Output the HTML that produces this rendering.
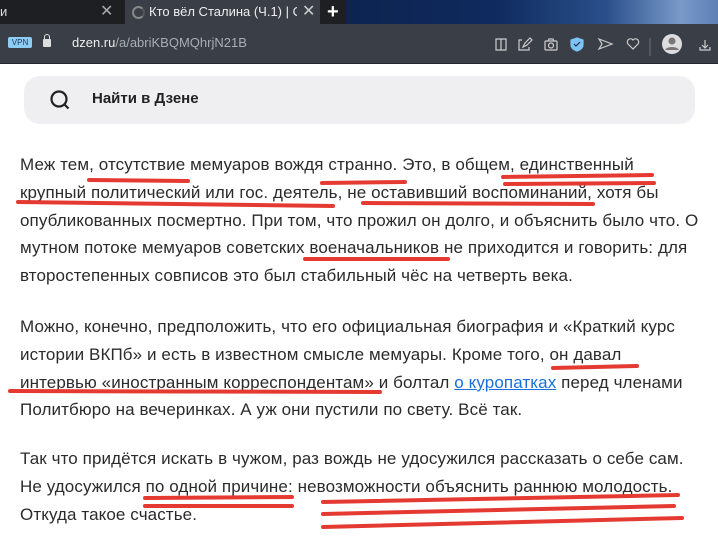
<!DOCTYPE html>
<html><head><meta charset="utf-8"><style>
body{margin:0;width:718px;height:542px;overflow:hidden;background:#fff;font-family:"Liberation Sans","DejaVu Sans",sans-serif;position:relative}
.tabs{position:absolute;left:0;top:0;width:718px;height:24px;background:#1e1f22}
.desk{position:absolute;left:346px;top:0;width:372px;height:24px;background:linear-gradient(90deg,#0d2450 0%,#0f2a5e 40%,#2a4f8a 70%,#7a9ac8 90%,#5d7fb5 100%)}
.tab1{position:absolute;left:0;top:0;width:124px;height:24px;color:#ddd;font-size:13px;line-height:24px}
.tab2{position:absolute;left:125px;top:0;width:195px;height:24px;background:#3a3f47;color:#eee;font-size:13px;line-height:24px}
.addr{position:absolute;left:0;top:24px;width:718px;height:39px;background:#3a3f47;border-bottom:1px solid #23262b}
.txt{position:absolute;left:20px;color:#2b2b2b;font-size:17px;line-height:27.8px;width:700px;white-space:nowrap;letter-spacing:0.1px}
.search{position:absolute;left:24px;top:76px;width:671px;height:48px;background:#efeff1;border-radius:16px}
a{color:#1a6fd8}
</style></head><body>
<div class="tabs"></div>
<div class="desk"></div>
<div class="tab1"><span>и</span><span style="position:absolute;left:100px;color:#aaa;font-size:16px">✕</span></div>
<div class="tab2"><span style="position:absolute;left:7px;top:6px;width:9px;height:9px;border:2px solid #888;border-radius:50%;border-right-color:#555"></span><span style="position:absolute;left:24px;width:148px;overflow:hidden;white-space:nowrap">Кто вёл Сталина (Ч.1) | Ole</span><span style="position:absolute;left:177px;color:#ccc;font-size:16px">✕</span></div>
<div style="position:absolute;left:327px;top:0;color:#fff;font-size:20px;line-height:24px;font-weight:bold">+</div>
<div class="addr">
<div style="position:absolute;left:8px;top:13px;width:24px;height:11px;background:#8ecbf5;color:#1d3a55;font-size:8px;line-height:11px;text-align:center;border-radius:2px">VPN</div>
<div style="position:absolute;left:43px;top:15px;width:8px;height:8px;background:#ddd;border-radius:1px"></div>
<div style="position:absolute;left:44px;top:10px;width:4px;height:6px;border:1px solid #ddd;border-bottom:none;border-radius:3px 3px 0 0"></div>
<div style="position:absolute;left:72px;top:11px;font-size:13px;color:#a9adb3"><span style="color:#eee">dzen.ru</span>/a/abriKBQMQhrjN21B</div>
<svg style="position:absolute;left:490px;top:8px" width="228" height="24" fill="none" stroke="#ccc" stroke-width="1.2">
<path d="M6 7h5v11H6zM11 7h5v11h-5z"/>
<path d="M32 8h-3v10h10v-3M33 15l2-4 5-5 2 2-5 5z"/>
<rect x="55" y="9" width="12" height="9" rx="1"/><circle cx="61" cy="13.5" r="2.5"/><path d="M58 9l1-2h4l1 2"/>
<path d="M87 6l6 2v5c0 3-3 5-6 6-3-1-6-3-6-6V8z" fill="#7cc3f5" stroke="#7cc3f5"/><path d="M84 12l2 2 4-4" stroke="#234"/>
<path d="M109 7l13 5-13 5 3-5z"/>
<path d="M143 17l-5-5a3 3 0 0 1 5-4 3 3 0 0 1 5 4z"/>
<line x1="160" y1="6" x2="160" y2="28" stroke="#666"/>
<circle cx="182" cy="12" r="10" fill="#ddd" stroke="none"/><circle cx="182" cy="9" r="3.5" fill="#777" stroke="none"/><path d="M175 18c2-4 12-4 14 0" fill="#777" stroke="none"/>
<path d="M215 8v8M212 13l3 3 3-3M210 15v3h10v-3"/>
</svg>
</div>
<div class="search">
<svg style="position:absolute;left:25px;top:13px" width="22" height="22" fill="none" stroke="#222" stroke-width="2.2"><circle cx="10" cy="10" r="7.5"/><path d="M15.5 15.5l4 4"/></svg>
<div style="position:absolute;left:68px;top:14px;font-size:15px;font-weight:bold;color:#222">Найти в Дзене</div>
</div>
<div class="txt" style="top:151px">Меж тем, отсутствие мемуаров вождя странно. Это, в общем, единственный<br>крупный политический или гос. деятель, не оставивший воспоминаний, хотя бы<br>опубликованных посмертно. При том, что прожил он долго, и объяснить было что. О<br>мутном потоке мемуаров советских военачальников не приходится и говорить: для<br>второстепенных совписов это был стабильный чёс на четверть века.</div>
<div class="txt" style="top:313px">Можно, конечно, предположить, что его официальная биография и «Краткий курс<br>истории ВКПб» и есть в известном смысле мемуары. Кроме того, он давал<br>интервью «иностранным корреспондентам» и болтал <a href="#">о куропатках</a> перед членами<br>Политбюро на вечеринках. А уж они пустили по свету. Всё так.</div>
<div class="txt" style="top:445px">Так что придётся искать в чужом, раз вождь не удосужился рассказать о себе сам.<br>Не удосужился по одной причине: невозможности объяснить раннюю молодость.<br>Откуда такое счастье.</div>
<svg style="position:absolute;left:0;top:0" width="718" height="542" fill="none" stroke="#e53a32" stroke-width="4" stroke-linecap="round">
<path d="M89 180L188 181"/>
<path d="M322 183L405 182"/>
<path d="M503 177L652 175"/>
<path d="M505 184L654 183"/>
<path d="M18 202L333 206"/>
<path d="M363 203L593 204"/>
<path d="M305 259L448 259"/>
<path d="M553 368L637 366"/>
<path d="M10 391L380 392"/>
<path d="M145 498L292 497"/>
<path d="M145 506L292 506"/>
<path d="M323 502L678 495"/>
<path d="M323 514L674 506"/>
<path d="M323 527L682 518"/>
</svg>
</body></html>
